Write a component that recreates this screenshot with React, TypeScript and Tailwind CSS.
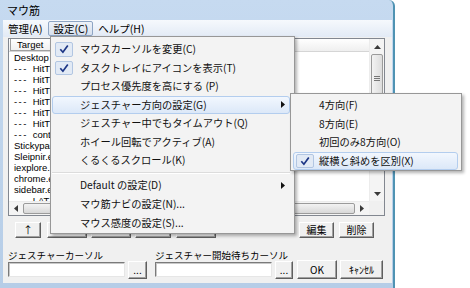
import React from "react";

const jp = "font-['Noto_Sans_CJK_JP',sans-serif]";
const lat = "font-['Liberation_Sans',sans-serif]";

type MenuItem = { label: string; checked?: boolean; sub?: boolean; hot?: boolean } | "sep";

const MAIN_MENU: MenuItem[] = [
  { label: "マウスカーソルを変更(C)", checked: true },
  { label: "タスクトレイにアイコンを表示(T)", checked: true },
  { label: "プロセス優先度を高にする (P)" },
  { label: "ジェスチャー方向の設定(G)", sub: true, hot: true },
  { label: "ジェスチャー中でもタイムアウト(Q)" },
  { label: "ホイール回転でアクティブ(A)" },
  { label: "くるくるスクロール(K)" },
  "sep",
  { label: "Default の設定(D)", sub: true },
  { label: "マウ筋ナビの設定(N)..." },
  { label: "マウス感度の設定(S)..." },
];

const SUB_MENU: MenuItem[] = [
  { label: "4方向(F)" },
  { label: "8方向(E)" },
  { label: "初回のみ8方向(O)" },
  { label: "縦横と斜めを区別(X)", checked: true, hot: true },
];

// only the part left of the open menu is visible
const ROWS = [
  "Desktop",
  "--- HitT",
  "--- HitT",
  "--- HitT",
  "--- HitT",
  "--- HitT",
  "--- HitT",
  "--- cont",
  "Stickypa",
  "Sleipnir.e",
  "iexplore.",
  "chrome.e",
  "sidebar.e",
  "--- LAT",
];

function Check() {
  return (
    <svg width="10" height="10" viewBox="0 0 10 10">
      <path d="M1.3 5.2 L3.9 8.2 L8.8 1.4" fill="none" stroke="#1c3585" strokeWidth="1.7" />
    </svg>
  );
}

function Arrow() {
  return (
    <svg width="4" height="7" viewBox="0 0 4 7">
      <path d="M0 0 L4 3.5 L0 7 Z" fill="#111" />
    </svg>
  );
}

// small scrollbar arrow
function ScrollArrow({ dir }: { dir: "up" | "down" | "left" | "right" }) {
  const d = {
    up: "M0 4 L3.5 0 L7 4 Z",
    down: "M0 0 L7 0 L3.5 4 Z",
    left: "M4 0 L4 7 L0 3.5 Z",
    right: "M0 0 L4 3.5 L0 7 Z",
  }[dir];
  const vertical = dir === "up" || dir === "down";
  return (
    <svg width={vertical ? 7 : 4} height={vertical ? 4 : 7} viewBox={vertical ? "0 0 7 4" : "0 0 4 7"}>
      <path d={d} fill="#3a3a3a" />
    </svg>
  );
}

function MenuRow({ item, h, textLeft }: { item: Exclude<MenuItem, "sep">; h: string; textLeft: string }) {
  return (
    <div
      className={`relative flex items-center ${h} ${
        item.hot
          ? "rounded-[3px] border border-[#b3cdee] bg-gradient-to-b from-[#f2f7fe] to-[#dce8f8]"
          : "border border-transparent"
      }`}
    >
      {item.checked && (
        <div className="absolute left-[2px] top-[1px] bottom-[1px] w-[18px] flex items-center justify-center rounded-[2px] border border-[#b2c6e2] bg-[#e2eaf5]">
          <Check />
        </div>
      )}
      <span className={`${textLeft} text-[10.25px] leading-[14px] whitespace-nowrap text-[#111]`}>{item.label}</span>
      {item.sub && (
        <span className="ml-auto mr-[4px] flex">
          <Arrow />
        </span>
      )}
    </div>
  );
}

function MainMenu() {
  return (
    <div className={`${jp} absolute left-[50px] top-[36px] w-[245px] h-[198px] border border-[#979797] bg-[#f3f3f3] pt-[3px] pl-[1px] pr-[4px] shadow-[2px_2px_3px_rgba(0,0,0,0.3)]`}>
      {MAIN_MENU.map((item, i) =>
        item === "sep" ? (
          <div key={i} className="h-[6px] flex flex-col justify-center">
            <div className="h-px bg-[#dcdcdc]" />
            <div className="h-px bg-white" />
          </div>
        ) : (
          <MenuRow key={i} item={item} h={i < 7 ? "h-[18.5px]" : "h-[19px]"} textLeft="ml-[27px]" />
        )
      )}
    </div>
  );
}

function SubMenu() {
  return (
    <div className={`${jp} absolute left-[290px] top-[93px] w-[172px] h-[78px] border border-[#979797] bg-[#f3f3f3] pt-[2px] pl-[2px] pr-[3px] shadow-[2px_2px_3px_rgba(0,0,0,0.3)]`}>
      {SUB_MENU.map((item, i) =>
        item === "sep" ? null : <MenuRow key={i} item={item} h="h-[18.5px]" textLeft="ml-[25px]" />
      )}
    </div>
  );
}

function Btn({ label, w, className = "" }: { label?: string; w: string; className?: string }) {
  return (
    <div
      className={`${w} ${className} flex items-center justify-center border border-t-white border-l-white border-r-[#5f5f5f] border-b-[#5f5f5f] bg-[#f0f0f0] shadow-[inset_-1px_-1px_0_#a0a0a0] text-[10px] leading-none text-black`}
    >
      {label}
    </div>
  );
}

function Field({ w }: { w: string }) {
  return (
    <div className={`${w} h-[15px] border border-t-[#7a7a7a] border-l-[#7a7a7a] border-r-[#e6e6e6] border-b-[#e6e6e6] bg-white shadow-[inset_1px_1px_0_#c8c8c8]`} />
  );
}

function ListView() {
  return (
    <div className="mt-[1px] h-[178px] border border-[#828790] bg-white flex flex-col">
      <div className="flex h-[162px]">
        <div className="flex-1 flex flex-col overflow-hidden">
          <div className={`${lat} flex h-[13px] bg-gradient-to-b from-white to-[#efefef] border-b border-[#d5d5d5] text-[9.5px] leading-[12px]`}>
            <div className="ml-px w-[41px] border border-[#a0a0a0] border-t-0 pl-[6px]">Target</div>
            <div className="flex-1" />
          </div>
          <div className={`${lat} w-[42px] overflow-hidden text-[9.5px] leading-[11px] text-black pl-[5px]`}>
            {ROWS.map((r, i) => (
              <div key={i} className="h-[11px] whitespace-nowrap">
                {r.startsWith("---") ? (
                  <>
                    <span className="tracking-[1.4px]">---</span>
                    <span className="ml-[5px]">{r.slice(4)}</span>
                  </>
                ) : (
                  r
                )}
              </div>
            ))}
          </div>
        </div>
        <div className="w-[15px] flex flex-col bg-[#f4f4f4] border-l border-[#ececec]">
          <div className="h-[15px] flex items-center justify-center">
            <ScrollArrow dir="up" />
          </div>
          <div className="mx-[1px] h-[48px] rounded-[2px] border border-[#9b9b9b] bg-gradient-to-r from-[#f3f3f3] to-[#dcdcdc] flex flex-col items-center justify-center gap-[1px]">
            <div className="w-[6px] h-px bg-[#777]" />
            <div className="w-[6px] h-px bg-[#777]" />
            <div className="w-[6px] h-px bg-[#777]" />
          </div>
          <div className="flex-1" />
          <div className="h-[15px] flex items-center justify-center">
            <ScrollArrow dir="down" />
          </div>
        </div>
      </div>
      <div className="flex h-[14px]">
        <div className="flex-1 flex bg-[#f4f4f4] border-t border-[#ececec]">
          <div className="w-[14px] flex items-center justify-center">
            <ScrollArrow dir="left" />
          </div>
          <div className="flex-1 my-[1px] rounded-[2px] border border-[#9b9b9b] bg-gradient-to-b from-[#f3f3f3] to-[#d8d8d8]" />
          <div className="w-[14px] flex items-center justify-center">
            <ScrollArrow dir="right" />
          </div>
        </div>
        <div className="w-[15px] bg-[#f0f0f0]" />
      </div>
    </div>
  );
}

export default function App() {
  return (
    <div className="relative w-[470px] h-[288px] bg-white overflow-hidden">
      <div className="w-[395px] h-[288px] flex flex-col rounded-tr-[6px] bg-gradient-to-b from-[#c6daf0] to-[#b6cde7] border-r-[2px] border-[#4f93b3]">
        <div className={`${jp} h-[20px] pl-[7px] flex items-center text-[11px] text-black`}>マウ筋</div>
        <div className="flex-1 ml-[3px] mr-[1px] mb-[5px] flex flex-col bg-[#f0f0f0] pl-[5px] pr-[7px]">
          <div className={`${jp} -ml-[5px] -mr-[7px] h-[17px] flex items-center bg-gradient-to-b from-[#f6f9fd] to-[#e2eaf5] text-[10.5px] text-black`}>
            <div className="ml-[4px] px-[1px]">管理(A)</div>
            <div className="ml-[5px] h-[15px] px-[4px] flex items-center rounded-[2px] border border-[#8ea5c4] bg-gradient-to-b from-[#eef2f8] to-[#d7e0ed]">
              設定(C)
            </div>
            <div className="ml-[5px]">ヘルプ(H)</div>
          </div>
          <ListView />
          <div className={`${jp} mt-[6px] h-[16px] flex`}>
            <Btn label="↑" w="w-[26px]" className="ml-[7px]" />
            <Btn w="w-[40px]" className="ml-[6px]" />
            <Btn w="w-[40px]" className="ml-[4px]" />
            <Btn w="w-[36px]" className="ml-[4px]" />
            <Btn w="w-[40px]" className="ml-[5px]" />
            <Btn label="編集" w="w-[35px]" className="ml-auto" />
            <Btn label="削除" w="w-[35px]" className="ml-[5px] mr-[11px]" />
          </div>
          <div className={`${jp} mt-[12px] h-[10px] flex text-[9.5px] leading-[10px] text-black`}>
            <div className="w-[147px]">ジェスチャーカーソル</div>
            <div>ジェスチャー開始待ちカーソル</div>
          </div>
          <div className={`${jp} h-[19px] flex items-center`}>
            <Field w="w-[117px]" />
            <Btn label="..." w="w-[19px] h-[18px]" className="ml-[3px]" />
            <Field w="w-[117px] ml-[8px]" />
            <Btn label="..." w="w-[18px] h-[18px]" className="ml-[3px]" />
            <Btn label="OK" w="w-[40px] h-[19px]" className="ml-[4px]" />
            <Btn label="ｷｬﾝｾﾙ" w="w-[43px] h-[19px]" className="ml-[3px]" />
          </div>
        </div>
      </div>
      <MainMenu />
      <SubMenu />
    </div>
  );
}
